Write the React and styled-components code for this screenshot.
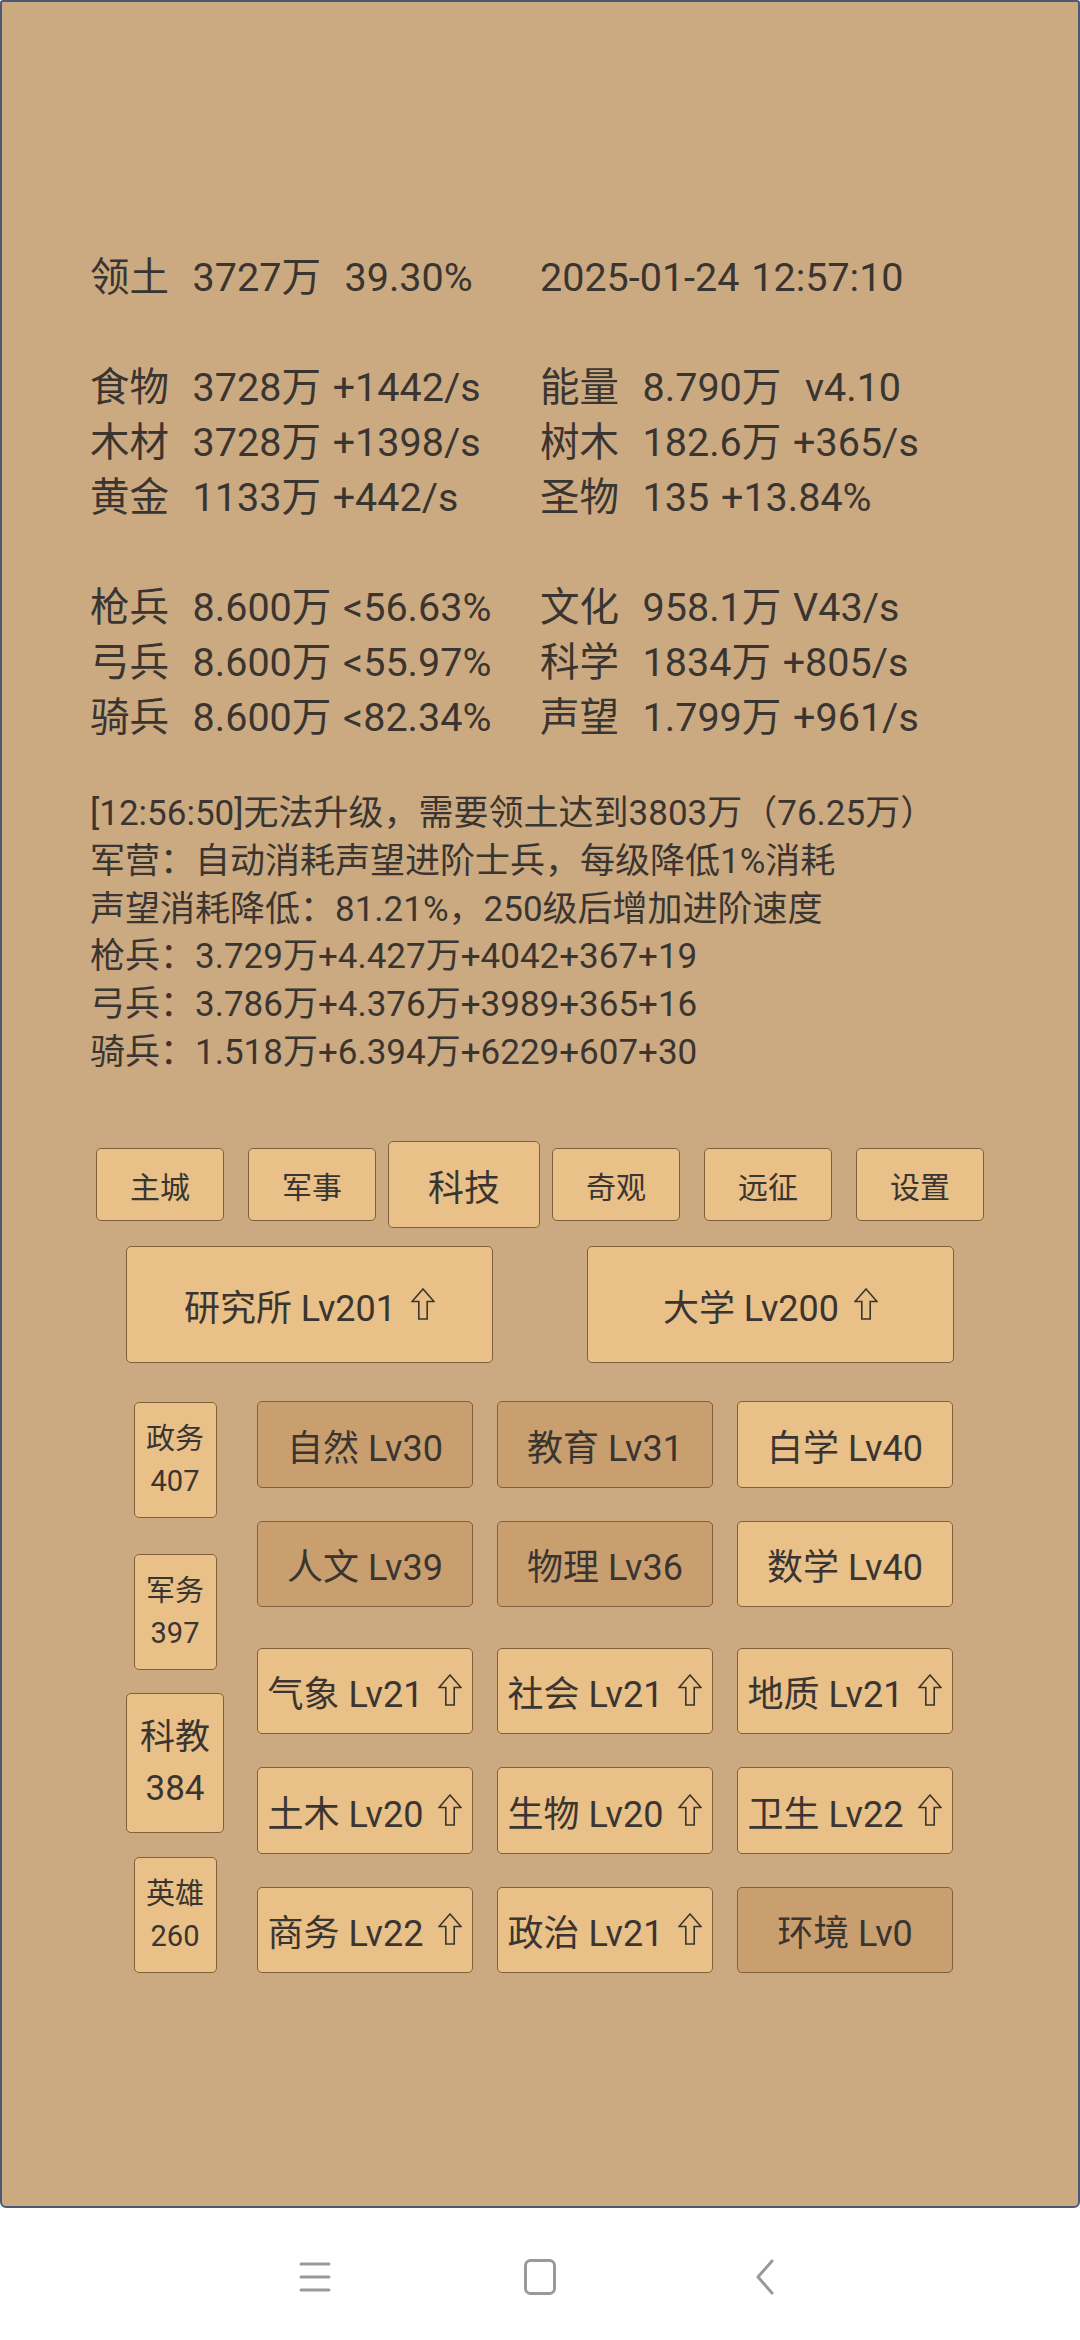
import React from 'react';
import styled, { createGlobalStyle } from 'styled-components';

const GlobalStyle = createGlobalStyle`
  html, body {
    margin: 0;
    padding: 0;
    background: #ffffff;
  }
  body {
    font-family: Roboto, 'Noto Sans CJK SC', sans-serif;
    color: #3a3530;
  }
`;

const Screen = styled.div`
  box-sizing: border-box;
  height: 2208px;
  background: #cbaa82;
  border: 2px solid #4b5878;
  border-radius: 3px 3px 6px 6px;
  padding-top: 247.5px;
  display: flex;
  flex-direction: column;
`;

const Stats = styled.div`
  padding-left: 88px;
`;

const StatLine = styled.div`
  display: grid;
  grid-template-columns: 450px auto;
  height: 55px;
  line-height: 55px;
  font-size: 39.5px;
  word-spacing: 2px;
  white-space: pre;
`;

const Log = styled.div`
  margin-top: 45.5px;
  padding-left: 88px;
  font-size: 35px;
  line-height: 47.8px;
  white-space: pre;
`;

const TabRow = styled.div`
  margin-top: 64.5px;
  height: 87px;
  display: flex;
  justify-content: center;
  align-items: center;
`;

const TabSlot = styled.div`
  width: 152px;
  display: flex;
  justify-content: center;
`;

const Tab = styled.div`
  box-sizing: border-box;
  width: ${(p) => (p.$active ? '152px' : '128px')};
  height: ${(p) => (p.$active ? '87px' : '73px')};
  font-size: ${(p) => (p.$active ? '36px' : '30px')};
  background: #e9c087;
  border: 1.5px solid #80603c;
  border-radius: 5px;
  display: flex;
  align-items: center;
  justify-content: center;
`;

const Panel = styled.div`
  width: 828px;
  margin: 0 auto;
`;

const BigRow = styled.div`
  margin-top: 18px;
  display: flex;
  justify-content: space-between;
`;

const BigButton = styled.div`
  box-sizing: border-box;
  width: 367px;
  height: 117px;
  background: #e9c087;
  border: 1.5px solid #80603c;
  border-radius: 5px;
  font-size: 36px;
  display: flex;
  align-items: center;
  justify-content: center;
  gap: 15px;
`;

const Lower = styled.div`
  margin-top: 21px;
  display: flex;
  align-items: center;
  gap: 33px;
`;

const Side = styled.div`
  width: 98px;
  display: flex;
  flex-direction: column;
`;

const SideSlot = styled.div`
  height: 151.5px;
  display: flex;
  align-items: center;
  justify-content: center;
`;

const SideButton = styled.div`
  box-sizing: border-box;
  width: ${(p) => (p.$active ? '98px' : '83px')};
  height: ${(p) => (p.$active ? '140px' : '116px')};
  font-size: ${(p) => (p.$active ? '35px' : '29px')};
  line-height: ${(p) => (p.$active ? '51px' : '42px')};
  background: #e9c087;
  border: 1.5px solid #80603c;
  border-radius: 5px;
  display: flex;
  flex-direction: column;
  align-items: center;
  justify-content: center;
`;

const Grids = styled.div`
  display: flex;
  flex-direction: column;
  gap: 40.5px;
`;

const CellGrid = styled.div`
  display: grid;
  grid-template-columns: repeat(3, 216px);
  grid-auto-rows: 86.5px;
  column-gap: 24px;
  row-gap: 33px;
`;

const Cell = styled.div`
  box-sizing: border-box;
  background: ${(p) => (p.$maxed ? '#c99f6f' : '#e9c087')};
  border: 1.5px solid #80603c;
  border-radius: 5px;
  font-size: 36px;
  white-space: pre;
  display: flex;
  align-items: center;
  justify-content: center;
  gap: 15px;
`;

const NavBar = styled.div`
  height: 132px;
  display: flex;
  justify-content: center;
  align-items: center;
`;

const NavSlot = styled.div`
  width: 225px;
  display: flex;
  justify-content: center;
  align-items: center;
  margin-top: 6px;
`;

function UpArrow() {
  return (
    <svg width="24" height="32" viewBox="0 0 24 32" style={{ marginTop: -2, flexShrink: 0 }}>
      <polygon
        points="12,1 23,13.5 16.2,13.5 16.2,31 7.8,31 7.8,13.5 1,13.5"
        fill="none"
        stroke="#3a3530"
        strokeWidth="1.6"
      />
    </svg>
  );
}

const stats = [
  ['领土  3727万  39.30%', '2025-01-24 12:57:10'],
  null,
  ['食物  3728万 +1442/s', '能量  8.790万  v4.10'],
  ['木材  3728万 +1398/s', '树木  182.6万 +365/s'],
  ['黄金  1133万 +442/s', '圣物  135 +13.84%'],
  null,
  ['枪兵  8.600万 <56.63%', '文化  958.1万 V43/s'],
  ['弓兵  8.600万 <55.97%', '科学  1834万 +805/s'],
  ['骑兵  8.600万 <82.34%', '声望  1.799万 +961/s'],
];

const logLines = [
  '[12:56:50]无法升级，需要领土达到3803万（76.25万）',
  '军营：自动消耗声望进阶士兵，每级降低1%消耗',
  '声望消耗降低：81.21%，250级后增加进阶速度',
  '枪兵：3.729万+4.427万+4042+367+19',
  '弓兵：3.786万+4.376万+3989+365+16',
  '骑兵：1.518万+6.394万+6229+607+30',
];

const tabs = ['主城', '军事', '科技', '奇观', '远征', '设置'];

const sideItems = [
  { name: '政务', value: '407' },
  { name: '军务', value: '397' },
  { name: '科教', value: '384', active: true },
  { name: '英雄', value: '260' },
];

const groupA = [
  { name: '自然 Lv30', maxed: true },
  { name: '教育 Lv31', maxed: true },
  { name: '白学 Lv40' },
  { name: '人文 Lv39', maxed: true },
  { name: '物理 Lv36', maxed: true },
  { name: '数学 Lv40' },
];

const groupB = [
  { name: '气象 Lv21', up: true },
  { name: '社会 Lv21', up: true },
  { name: '地质 Lv21', up: true },
  { name: '土木 Lv20', up: true },
  { name: '生物 Lv20', up: true },
  { name: '卫生 Lv22', up: true },
  { name: '商务 Lv22', up: true },
  { name: '政治 Lv21', up: true },
  { name: '环境 Lv0', maxed: true },
];

function renderCells(list) {
  return list.map((c) => (
    <Cell key={c.name} $maxed={c.maxed}>
      <span>{c.name}</span>
      {c.up && <UpArrow />}
    </Cell>
  ));
}

export default function App() {
  return (
    <>
      <GlobalStyle />
      <Screen>
        <Stats>
          {stats.map((row, i) => (
            <StatLine key={i}>
              <span>{row ? row[0] : ''}</span>
              <span>{row ? row[1] : ''}</span>
            </StatLine>
          ))}
        </Stats>

        <Log>
          {logLines.map((line) => (
            <div key={line}>{line}</div>
          ))}
        </Log>

        <TabRow>
          {tabs.map((t) => (
            <TabSlot key={t}>
              <Tab $active={t === '科技'}>{t}</Tab>
            </TabSlot>
          ))}
        </TabRow>

        <Panel>
          <BigRow>
            <BigButton>
              <span>研究所 Lv201</span>
              <UpArrow />
            </BigButton>
            <BigButton>
              <span>大学 Lv200</span>
              <UpArrow />
            </BigButton>
          </BigRow>

          <Lower>
            <Side>
              {sideItems.map((s) => (
                <SideSlot key={s.name}>
                  <SideButton $active={s.active}>
                    <span>{s.name}</span>
                    <span>{s.value}</span>
                  </SideButton>
                </SideSlot>
              ))}
            </Side>
            <Grids>
              <CellGrid>{renderCells(groupA)}</CellGrid>
              <CellGrid>{renderCells(groupB)}</CellGrid>
            </Grids>
          </Lower>
        </Panel>
      </Screen>

      <NavBar>
        <NavSlot>
          <svg width="32" height="30" viewBox="0 0 32 30">
            <g stroke="#9a9a9a" strokeWidth="3" strokeLinecap="round">
              <line x1="2" y1="2" x2="30" y2="2" />
              <line x1="2" y1="15" x2="30" y2="15" />
              <line x1="2" y1="28" x2="30" y2="28" />
            </g>
          </svg>
        </NavSlot>
        <NavSlot>
          <svg width="32" height="36" viewBox="0 0 32 36">
            <rect x="1.5" y="1.5" width="29" height="33" rx="5" fill="none" stroke="#9a9a9a" strokeWidth="3" />
          </svg>
        </NavSlot>
        <NavSlot>
          <svg width="20" height="36" viewBox="0 0 20 36">
            <polyline points="17,2 3,18 17,34" fill="none" stroke="#9a9a9a" strokeWidth="3" strokeLinecap="round" strokeLinejoin="round" />
          </svg>
        </NavSlot>
      </NavBar>
    </>
  );
}
